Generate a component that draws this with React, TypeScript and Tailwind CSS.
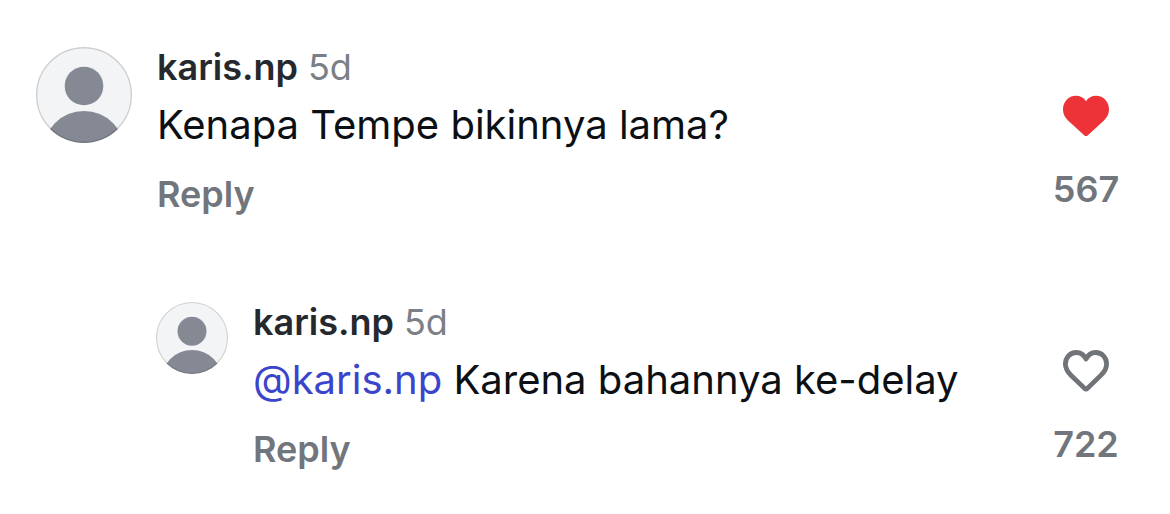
import { useState } from 'react'
import clsx from 'clsx'

type CommentData = {
    id: number
    user: string
    age: string
    mention?: string
    text: string
    likes: number
    liked: boolean
    isReply: boolean
}

const comments: CommentData[] = [
    { id: 1, user: 'karis.np', age: '5d', text: 'Kenapa Tempe bikinnya lama?', likes: 567, liked: true, isReply: false },
    { id: 2, user: 'karis.np', age: '5d', mention: '@karis.np', text: 'Karena bahannya ke-delay', likes: 722, liked: false, isReply: true },
]

function Avatar({ small }: { small: boolean }) {
    return (
        <svg viewBox="0 0 96 96" className={clsx('mt-[6px] shrink-0', small ? 'size-[72px]' : 'size-24')} aria-hidden="true">
            <defs>
                <clipPath id={small ? 'avatar-small' : 'avatar-large'}>
                    <circle cx="48" cy="48" r="48" />
                </clipPath>
            </defs>
            <g clipPath={small ? 'url(#avatar-small)' : 'url(#avatar-large)'}>
                <rect width="96" height="96" fill="#f2f4f6" />
                <circle cx="48" cy="39" r="19.3" fill="#848994" />
                <circle cx="48" cy="105" r="41" fill="#848994" />
            </g>
            <circle cx="48" cy="48" r="47.3" fill="none" stroke="#000" strokeOpacity="0.15" strokeWidth="1.4" />
        </svg>
    )
}

function Heart({ filled }: { filled: boolean }) {
    return (
        <svg viewBox="0 0 48 48" className="size-12" aria-hidden="true">
            {filled ? (
                <path
                    d="M24 9.2C21.8 5.8 18.2 3.8 14 3.8C6.5 3.8 1 9.8 1 17.2C1 22.6 3.4 26 7.4 29.8L22.4 43.4Q24 44.8 25.6 43.4L40.6 29.8C44.6 26 47 22.6 47 17.2C47 9.8 41.5 3.8 34 3.8C29.8 3.8 26.2 5.8 24 9.2Z"
                    fill="#ed3338"
                />
            ) : (
                <path
                    d="M24 12C22 7.9 18.6 5.5 14.3 5.5C8 5.5 3.4 10.4 3.4 17C3.4 21.8 5.6 25 9.2 28.4L22.6 41.4Q24 42.6 25.4 41.4L38.8 28.4C42.4 25 44.6 21.8 44.6 17C44.6 10.4 40 5.5 33.7 5.5C29.4 5.5 26 7.9 24 12Z"
                    fill="none"
                    stroke="#707478"
                    strokeWidth="4.8"
                    strokeLinejoin="round"
                />
            )}
        </svg>
    )
}

function Comment({ comment }: { comment: CommentData }) {
    const [liked, setLiked] = useState(comment.liked)

    return (
        <article className={clsx('flex items-start gap-[25px]', comment.isReply && 'pl-[120px]')}>
            <Avatar small={comment.isReply} />
            <div className="min-w-0 flex-1">
                <div className="flex gap-[10px] text-[36px] leading-[52px]">
                    <a href="#profile" className="font-semibold text-[#25282d]">{comment.user}</a>
                    <span className="text-[#7b7f86]">{comment.age}</span>
                </div>
                <p className="text-[40px] leading-[64px] text-[#0c0f14]">
                    {comment.mention && <><a href="#profile" className="text-[#3a45cb]">{comment.mention}</a>{' '}</>}
                    {comment.text}
                </p>
                <button type="button" className="mt-3 block text-[36px] leading-[50px] font-semibold text-[#71757c]">
                    Reply
                </button>
            </div>
            <div className="mt-[51px] flex w-[72px] shrink-0 flex-col items-center gap-6">
                <button type="button" aria-label="Like" aria-pressed={liked} onClick={() => setLiked(!liked)}>
                    <Heart filled={liked} />
                </button>
                <span className="text-[36px] leading-[50px] font-semibold text-[#71757c]">{comment.likes}</span>
            </div>
        </article>
    )
}

export default function App() {
    return (
        <main className="flex min-h-screen flex-col gap-[77px] bg-white pt-[41px] pr-12 pb-10 pl-9 font-['Inter',sans-serif]">
            {comments.map((comment) => (
                <Comment key={comment.id} comment={comment} />
            ))}
        </main>
    )
}
